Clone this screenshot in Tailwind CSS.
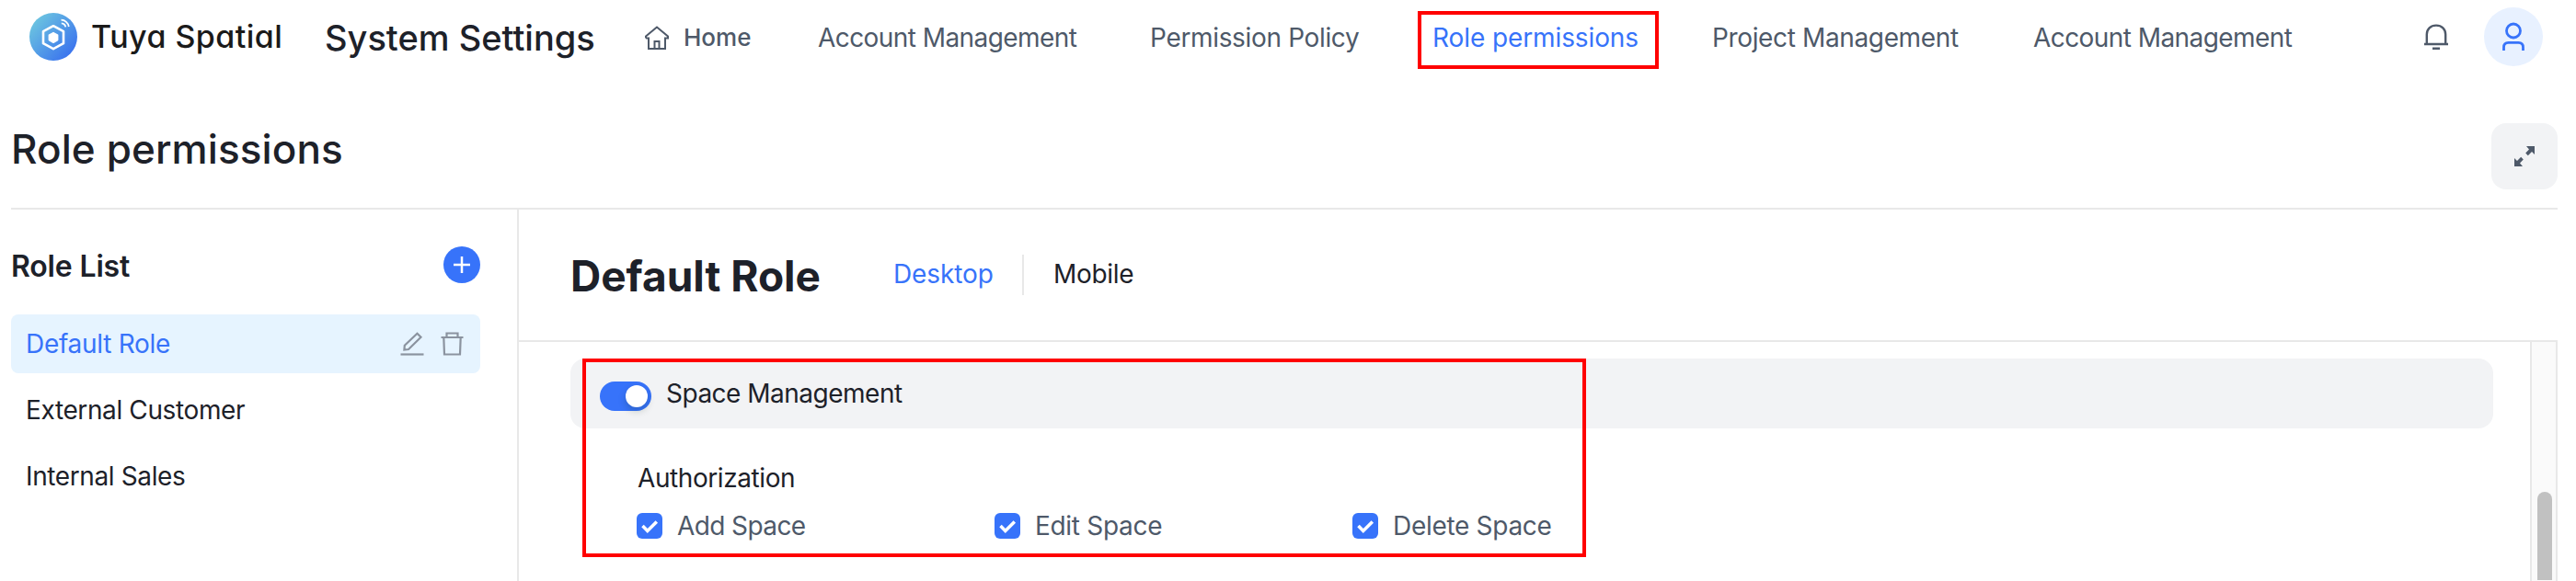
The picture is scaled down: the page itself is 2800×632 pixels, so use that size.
<!DOCTYPE html>
<html lang="en">
<head>
    <meta charset="UTF-8">
    <meta name="viewport" content="width=device-width, initial-scale=1.0">
    <title>Role permissions - System Settings</title>
    <script src="https://cdn.jsdelivr.net/npm/@tailwindcss/browser@4"></script>
</head>
<body class="bg-white h-[632px] overflow-hidden font-['Inter',sans-serif] text-[28px] leading-10 text-[#1d2129] whitespace-nowrap">

    <!-- Top bar -->
    <header class="flex items-center h-20 pl-8">
        <svg class="w-[52px] h-[52px] shrink-0" viewBox="0 0 52 52" fill="none">
            <defs>
                <linearGradient id="logo" x1="4" y1="8" x2="46" y2="46" gradientUnits="userSpaceOnUse">
                    <stop stop-color="#6cc5e0"/>
                    <stop offset="1" stop-color="#3a72ee"/>
                </linearGradient>
            </defs>
            <circle cx="26" cy="26" r="26" fill="url(#logo)"/>
            <path d="M26 14.200l11 6v13l-11 6-11-6v-13z" stroke="#fff" stroke-width="2.600" stroke-linejoin="round"/>
            <path d="M26 21.500l4.700 2.700v5.400L26 32.300l-4.700-2.700v-5.400z" fill="#fff" stroke="#fff" stroke-width="1.400" stroke-linejoin="round"/>
            <path d="M34.500 7.700a8.500 8.500 0 0 1 8.300 7.300M34.800 11.300a4.800 4.800 0 0 1 4.500 4" stroke="#fff" stroke-width="1.800"/>
        </svg>
        <span class="ml-[15px] w-[254px] text-[34px] font-medium tracking-[0.45px] [font-feature-settings:'cv11'] text-[#1a1a1a]">Tuya Spatial</span>
        <h1 class="w-[347px] pt-0.5 text-[38px] font-medium">System Settings</h1>

        <nav class="flex items-center pt-px text-[#4e5969]">
            <a class="flex items-center w-[189px] text-[26px] font-medium">
                <svg class="w-7 h-7 mr-[15px]" viewBox="0 0 28 28" fill="none" stroke="currentColor" stroke-width="2">
                    <path d="M5 13.500V26h18V13.500M2 14.500v-2L14 2.500l12 10v2H23M5 14.500H2M11.500 26v-8h5v8"/>
                </svg>
                Home
            </a>
            <a class="w-[361px] tracking-[-0.57px]">Account Management</a>
            <a class="w-[291px] tracking-[-0.34px]">Permission Policy</a>
            <a class="relative w-80 pl-4 text-[#3773fa] tracking-[-0.1px]">
                Role permissions
                <span class="absolute left-0 -top-[9px] w-[262px] h-[63px] border-4 border-[#ff0000]"></span>
            </a>
            <a class="w-[349px] tracking-[-0.36px]">Project Management</a>
            <a class="w-[424px] tracking-[-0.57px]">Account Management</a>
        </nav>

        <svg class="w-7 h-7 shrink-0 text-[#4e5969]" viewBox="0 0 28 28" fill="none" stroke="currentColor" stroke-width="2.400">
            <path d="M1 22h26M3.800 22V11.500C3.800 5.500 8 1.600 14 1.600s10.200 3.900 10.200 9.900V22M10 26.800h8"/>
        </svg>
        <span class="ml-[38px] flex items-center justify-center w-16 h-16 shrink-0 rounded-full bg-[#e8f1ff] text-[#3773fa]">
            <svg class="w-8 h-8" viewBox="0 0 32 32" fill="none" stroke="currentColor" stroke-width="2.800">
                <circle cx="16" cy="9.500" r="7.500"/>
                <path d="M5.500 31v-3.500c0-3.500 2-5.100 5-5.100h11c3 0 5 1.600 5 5.100V31"/>
            </svg>
        </span>
    </header>

    <!-- Page title -->
    <div class="flex justify-between ml-3 mr-5 h-[148px] border-b-2 border-[#e8e8e8]">
        <h2 class="mt-[62px] text-[44px] font-medium tracking-[0.1px]">Role permissions</h2>
        <button class="mt-[54px] flex items-center justify-center w-[72px] h-[72px] rounded-2xl bg-[#f2f3f5] text-[#4e5969]">
            <svg class="w-6 h-6" viewBox="0 0 24 24" fill="currentColor">
                <path d="M14 1h9v9l-3-3-4.200 4.200-2.600-2.600L17 4.500zM10 23H1v-9l3 3 4.200-4.200 2.600 2.600L7 19.500z"/>
            </svg>
        </button>
    </div>

    <div class="flex h-[404px]">
        <!-- Role list -->
        <aside class="w-[564px] shrink-0 border-r-2 border-[#e8e8e8] pl-3 pr-10">
            <div class="flex items-center justify-between h-[120px]">
                <h3 class="mt-1 text-[32px] font-semibold tracking-[-0.17px]">Role List</h3>
                <button class="flex items-center justify-center w-10 h-10 rounded-full bg-[#3773fa]">
                    <svg class="w-[18px] h-[18px]" viewBox="0 0 18 18" stroke="#fff" stroke-width="2.500"><path d="M9 0v18M0 9h18"/></svg>
                </button>
            </div>
            <ul class="-mt-1.5 flex flex-col gap-2">
                <li class="flex items-center h-16 rounded-lg bg-[#e6f4ff] pl-4 pr-[18px] text-[#3773fa]">
                    <span class="grow tracking-[-0.29px]">Default Role</span>
                    <svg class="w-[26px] h-[26px] text-[#8b939f]" viewBox="0 0 26 26" fill="none" stroke="currentColor" stroke-width="2.200">
                        <path d="M0.500 24.500h25"/>
                        <path d="M18.500 1.800l4 4L9 19l-4.600.6.4-4.800z"/>
                    </svg>
                    <svg class="ml-[18px] w-[25px] h-[26px] text-[#8b939f]" viewBox="0 0 25 26" fill="none" stroke="currentColor" stroke-width="2.200">
                        <path d="M0.500 6h24M6.500 6V1.500h12V6M3.300 6l.7 18.500h17l.7-18.500"/>
                    </svg>
                </li>
                <li class="flex items-center h-16 pl-4 tracking-[-0.38px]">External Customer</li>
                <li class="flex items-center h-16 pl-4 tracking-[-0.38px]">Internal Sales</li>
            </ul>
        </aside>

        <!-- Role detail -->
        <main class="w-[2216px] shrink-0 flex flex-col">
            <div class="flex items-center h-36 shrink-0 border-b-2 border-[#e8e8e8] pl-14">
                <h3 class="w-[351px] pt-0.5 text-[46px] font-bold">Default Role</h3>
                <span class="w-[142px] h-11 leading-[42px] border-r-2 border-[#e8e8e8] tracking-[-0.1px] text-[#3773fa]">Desktop</span>
                <span class="ml-8 -mt-0.5 tracking-[-0.3px]">Mobile</span>
            </div>

            <div class="flex grow">
                <section class="relative w-[2146px] pl-14 pt-[18px]">
                    <div class="flex items-center h-[76px] rounded-2xl bg-[#f2f3f5] pl-8">
                        <span class="flex items-center justify-end w-14 h-8 mt-1.5 pr-1 rounded-full bg-[#3773fa]">
                            <span class="w-6 h-6 rounded-full bg-white shadow-[0_4px_8px_rgba(0,35,11,0.2)]"></span>
                        </span>
                        <span class="ml-4 tracking-[-0.5px]">Space Management</span>
                    </div>
                    <div class="pl-[72px] pt-[34px]">
                        <p class="pl-px tracking-[-0.42px]">Authorization</p>
                        <div class="mt-3 grid grid-cols-[389px_389px_389px] text-[#4e5969]">
                            <label class="flex items-center gap-4">
                                <svg class="w-7 h-7" viewBox="0 0 28 28"><rect width="28" height="28" rx="6" fill="#3773fa"/><path d="M6.500 14l5.300 5.500 10-10" fill="none" stroke="#fff" stroke-width="3.500"/></svg>
                                <span class="tracking-[-0.6px]">Add Space</span>
                            </label>
                            <label class="flex items-center gap-4">
                                <svg class="w-7 h-7" viewBox="0 0 28 28"><rect width="28" height="28" rx="6" fill="#3773fa"/><path d="M6.500 14l5.300 5.500 10-10" fill="none" stroke="#fff" stroke-width="3.500"/></svg>
                                <span class="tracking-[-0.3px]">Edit Space</span>
                            </label>
                            <label class="flex items-center gap-4">
                                <svg class="w-7 h-7" viewBox="0 0 28 28"><rect width="28" height="28" rx="6" fill="#3773fa"/><path d="M6.500 14l5.300 5.500 10-10" fill="none" stroke="#fff" stroke-width="3.500"/></svg>
                                <span class="tracking-[-0.3px]">Delete Space</span>
                            </label>
                        </div>
                    </div>
                    <span class="absolute left-[69px] top-[18px] w-[1091px] h-[216px] border-4 border-[#ff0000]"></span>
                </section>

                <!-- Scrollbar track -->
                <div class="ml-10 w-[30px] border-x-2 border-[#e8e8e8] bg-[#fafafa] pl-1.5 pt-[163px]">
                    <div class="w-4 h-24 rounded-t-lg bg-[#c1c1c1]"></div>
                </div>
            </div>
        </main>
    </div>
</body>
</html>
